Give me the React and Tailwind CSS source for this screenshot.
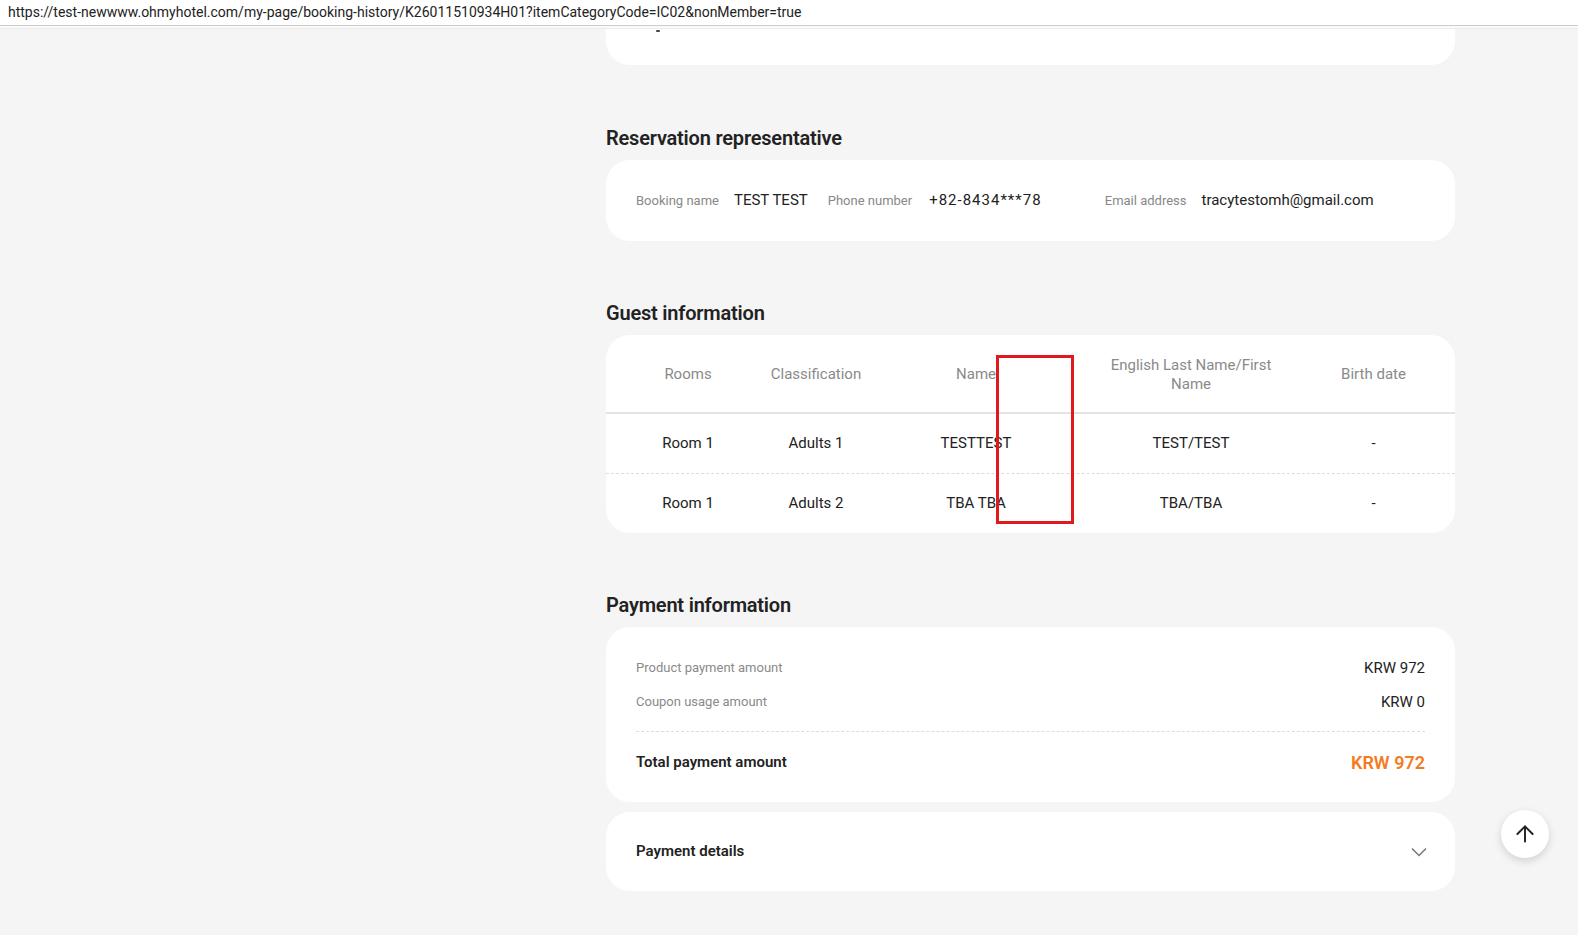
import { ArrowUp } from "lucide-react";

const guests = [
  { room: "Room 1", type: "Adults 1", name: "TESTTEST", en: "TEST/TEST", birth: "-" },
  { room: "Room 1", type: "Adults 2", name: "TBA TBA", en: "TBA/TBA", birth: "-" },
];

const cols = "grid grid-cols-[104px_152px_168px_262px_103px] px-[30px] text-center";

export default function App() {
  return (
    <div className="relative min-h-screen bg-[#f5f5f5] font-['Roboto',sans-serif] text-[#222]">
      {/* URL BAR */}
      <div className="relative z-10 h-[26px] bg-white border-b border-[#cccccc] px-2 flex items-center">
        <span className="text-[14px] text-[#222]">
          https://test-newwww.ohmyhotel.com/my-page/booking-history/K26011510934H01?itemCategoryCode=IC02&amp;nonMember=true
        </span>
      </div>
      <div className="h-[3px] bg-[#fafafa] border-b border-[#ececec]" />

      <div className="grid grid-cols-[606px_849px] pb-[50px]">
        <div />
        <div className="flex flex-col">
          {/* previous card, scrolled */}
          <div className="h-[36px] bg-white rounded-b-[24px] overflow-hidden px-[50px] pt-[1px]">
            <div className="w-[4px] h-[2px] bg-[#444] rounded-sm" />
          </div>

          {/* RESERVATION REPRESENTATIVE */}
          <h2 className="mt-[61px] text-[20px] font-semibold leading-[24px] tracking-[-0.2px]">
            Reservation representative
          </h2>
          <div className="mt-[10px] h-[81px] bg-white rounded-[24px] px-[30px] flex items-center">
            <div className="flex items-center gap-[15px]">
              <span className="text-[13px] text-[#888]">Booking name</span>
              <span className="text-[15px]">TEST TEST</span>
            </div>
            <div className="ml-5 w-[257px] flex items-center gap-[17px]">
              <span className="text-[13px] text-[#888]">Phone number</span>
              <span className="text-[15px] tracking-[1px]">+82-8434***78</span>
            </div>
            <div className="ml-5 flex items-center gap-[15px]">
              <span className="text-[13px] text-[#888]">Email address</span>
              <span className="text-[15px]">tracytestomh@gmail.com</span>
            </div>
          </div>

          {/* GUEST INFORMATION */}
          <h2 className="mt-[60px] text-[20px] font-semibold leading-[24px] tracking-[-0.2px]">
            Guest information
          </h2>
          <div className="mt-[10px] bg-white rounded-[24px] overflow-hidden">
            <div className={`${cols} h-[79px] pt-[2px] items-center border-b-2 border-[#e3e3e3] text-[15px] leading-[19px] text-[#8a8a8a]`}>
              <span>Rooms</span>
              <span>Classification</span>
              <span>Name</span>
              <span className="px-[30px]">English Last Name/First Name</span>
              <span>Birth date</span>
            </div>
            {guests.map((g, i) => (
              <div
                key={i}
                className={`${cols} items-center text-[15px] ${i === 0 ? "h-[60px] border-b border-dashed border-[#dcdcdc]" : "h-[59px]"}`}
              >
                <span>{g.room}</span>
                <span>{g.type}</span>
                <span>{g.name}</span>
                <span>{g.en}</span>
                <span>{g.birth}</span>
              </div>
            ))}
          </div>

          {/* PAYMENT INFORMATION */}
          <h2 className="mt-[60px] text-[20px] font-semibold leading-[24px] tracking-[-0.2px]">
            Payment information
          </h2>
          <div className="mt-[10px] bg-white rounded-[24px] px-[30px] pt-[29px] pb-[25px]">
            <div className="flex justify-between items-center h-[24px]">
              <span className="text-[13px] text-[#8a8a8a]">Product payment amount</span>
              <span className="text-[15px]">KRW 972</span>
            </div>
            <div className="flex justify-between items-center h-[24px] mt-[10px]">
              <span className="text-[13px] text-[#8a8a8a]">Coupon usage amount</span>
              <span className="text-[15px]">KRW 0</span>
            </div>
            <div className="mt-[17px] border-t border-dashed border-[#dcdcdc]" />
            <div className="flex justify-between items-center h-[30px] mt-[15px]">
              <span className="text-[15px] font-semibold">Total payment amount</span>
              <span className="text-[18px] font-semibold text-[#f47b20]">KRW 972</span>
            </div>
          </div>

          {/* PAYMENT DETAILS */}
          <div className="mt-[10px] h-[79px] bg-white rounded-[24px] pl-[30px] pr-[28px] flex items-center justify-between">
            <span className="text-[15px] font-semibold">Payment details</span>
            <svg width="16" height="10" viewBox="0 0 16 10" fill="none" className="text-[#777]">
              <path d="M1 1.5 8 8.5 15 1.5" stroke="currentColor" strokeWidth="1.5" />
            </svg>
          </div>
        </div>
      </div>

      {/* scroll to top */}
      <button className="absolute left-[1501px] top-[810px] w-12 h-12 rounded-full bg-white shadow-[0_3px_8px_rgba(0,0,0,0.15)] flex items-center justify-center">
        <ArrowUp size={26} strokeWidth={1.8} className="text-[#222]" />
      </button>

      {/* annotation */}
      <div className="absolute left-[996px] top-[355px] w-[78px] h-[169px] border-[3px] border-[#e0191e] pointer-events-none" />
    </div>
  );
}
